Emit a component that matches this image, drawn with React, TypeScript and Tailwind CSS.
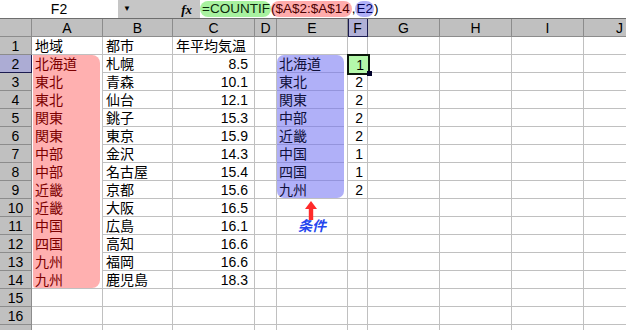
import React from 'react';

const LINE = 'border-[#c0c0c0]';

const colB = ['都市', '札幌', '青森', '仙台', '銚子', '東京', '金沢', '名古屋', '京都', '大阪', '広島', '高知', '福岡', '鹿児島'];
const colC = ['年平均気温', '8.5', '10.1', '12.1', '15.3', '15.9', '14.3', '15.4', '15.6', '16.5', '16.1', '16.6', '16.6', '18.3'];
const regions = ['北海道', '東北', '東北', '関東', '関東', '中部', '中部', '近畿', '近畿', '中国', '四国', '九州', '九州'];
const conds = ['北海道', '東北', '関東', '中部', '近畿', '中国', '四国', '九州'];
const counts = ['1', '2', '2', '2', '2', '1', '1', '2'];

const ROWS = 17;

function Header({ label, w, active }: { label: string; w: string; active?: boolean }) {
    return (
        <div
            className={`${w} h-[18px] flex items-center justify-center border-r border-b ${
                active
                    ? 'bg-[#b0b0d6] border-[#1c1c50] shadow-[inset_1px_0_0_#1c1c50]'
                    : 'bg-[#c0c0c0] border-[#8c8c8c]'
            }`}
        >
            {label}
        </div>
    );
}

function Cell({ children, right }: { children?: React.ReactNode; right?: boolean }) {
    return (
        <div
            className={`h-[18px] border-r border-b ${LINE} flex items-center whitespace-nowrap ${
                right ? 'justify-end pr-[6px]' : 'pl-[3px]'
            }`}
        >
            {children}
        </div>
    );
}

function Column({ label, w, values = [], right }: { label: string; w: string; values?: string[]; right?: boolean }) {
    return (
        <div className={`${w} shrink-0 flex flex-col`}>
            <Header label={label} w={w} />
            {Array.from({ length: ROWS }, (_, i) => (
                <Cell key={i} right={right && i > 0}>
                    {values[i]}
                </Cell>
            ))}
        </div>
    );
}

function UpArrow() {
    return (
        <svg width="12" height="19" viewBox="0 0 12 19" className="mt-[2px]">
            <path d="M6 0 L12 8 L8.2 8 L8.2 19 L3.8 19 L3.8 8 L0 8 Z" fill="#ff2a2a" />
        </svg>
    );
}

export default function App() {
    return (
        <div className="w-[626px] h-[330px] overflow-hidden bg-white text-[14px] leading-none text-black font-['Liberation_Sans','Noto_Sans_CJK_JP',sans-serif]">
            {/* Formula bar */}
            <div className="h-[19px] flex border-b border-[#6e6e6e]">
                <div className="w-[118px] flex items-center justify-center">F2</div>
                <div className="w-[82px] bg-[#c6c6c6] flex items-center">
                    <span className="ml-[5px] text-[8px]">▼</span>
                    <span className="ml-auto mr-[8px] font-['Liberation_Serif',serif] italic font-bold text-[13px]">fx</span>
                </div>
                <div className="flex items-center text-[13.5px]">
                    <span className="h-[16px] flex items-center rounded-full bg-[#a8f2a0] pl-[2px] pr-[1px] text-[#0c2a0c]">=COUNTIF</span>
                    <span className="h-[16px] flex items-center rounded-full bg-[#ffacac] pr-[2px] text-[#4a0000]">($A$2:$A$14</span>
                    <span>,</span>
                    <span className="h-[16px] flex items-center rounded-full bg-[#b0b0f8] px-[1px] text-[#000050]">E2</span>
                    <span>)</span>
                </div>
            </div>

            {/* Sheet */}
            <div className="flex">
                {/* Row numbers */}
                <div className="w-[32px] shrink-0 flex flex-col">
                    <div className="h-[18px] bg-[#c0c0c0] border-r border-b border-[#8c8c8c]" />
                    {Array.from({ length: ROWS }, (_, i) => (
                        <div
                            key={i}
                            className={`h-[18px] flex items-center justify-center border-r border-b ${
                                i === 1 ? 'bg-[#acacd4] border-[#1c1c50]' : 'bg-[#c0c0c0] border-[#8c8c8c]'
                            }`}
                        >
                            {i < 16 ? i + 1 : ''}
                        </div>
                    ))}
                </div>

                {/* A */}
                <div className="w-[71px] shrink-0 flex flex-col">
                    <Header label="A" w="w-[71px]" />
                    <Cell>地域</Cell>
                    <div className={`h-[234px] border-r border-b ${LINE}`}>
                        <div className="h-full ml-[1px] mr-[2px] bg-[#ffb0b0] rounded-tr-[8px] rounded-br-[8px] rounded-bl-[3px] text-[#7c0000]">
                            {regions.map((r, i) => (
                                <div key={i} className="h-[18px] flex items-center pl-[2px]">
                                    {r}
                                </div>
                            ))}
                        </div>
                    </div>
                    {Array.from({ length: 3 }, (_, i) => (
                        <Cell key={i} />
                    ))}
                </div>

                <Column label="B" w="w-[70px]" values={colB} />
                <Column label="C" w="w-[82px]" values={colC} right />
                <Column label="D" w="w-[22px]" />

                {/* E */}
                <div className="w-[71px] shrink-0 flex flex-col">
                    <Header label="E" w="w-[71px]" />
                    <Cell />
                    <div className={`h-[144px] border-r border-b ${LINE}`}>
                        <div className="h-full mr-[3px] bg-[#b0b0f8] rounded-[7px] text-[#10103c]">
                            {conds.map((c, i) => (
                                <div
                                    key={i}
                                    className={`h-[18px] flex items-center pl-[2px] ${
                                        i < conds.length - 1 ? 'border-b border-[#9494dc]' : ''
                                    }`}
                                >
                                    {c}
                                </div>
                            ))}
                        </div>
                    </div>
                    <div className={`h-[18px] border-r border-b ${LINE} flex justify-center pr-[2px]`}>
                        <UpArrow />
                    </div>
                    <div className={`h-[18px] border-r border-b ${LINE} flex items-center justify-center`}>
                        <span className="font-bold italic text-[14px] text-[#2446ee]">条件</span>
                    </div>
                    {Array.from({ length: 6 }, (_, i) => (
                        <Cell key={i} />
                    ))}
                </div>

                {/* F */}
                <div className="w-[20px] shrink-0 flex flex-col">
                    <Header label="F" w="w-[20px]" active />
                    <Cell />
                    <div className={`relative h-[18px] border-r border-b ${LINE}`}>
                        <div className="absolute -left-[1px] -top-[1px] w-[23px] h-[21px] z-10 border-2 border-[#0c180c] bg-[#b4f8aa] flex items-center justify-end pr-[4px]">
                            1
                        </div>
                        <div className="absolute left-[19px] top-[16px] w-[5px] h-[5px] z-20 bg-[#00002a]" />
                    </div>
                    {counts.slice(1).map((c, i) => (
                        <Cell key={i} right>
                            <span className="-mr-[2px]">{c}</span>
                        </Cell>
                    ))}
                    {Array.from({ length: ROWS - 9 }, (_, i) => (
                        <Cell key={i} />
                    ))}
                </div>

                <Column label="G" w="w-[72px]" />
                <Column label="H" w="w-[72px]" />
                <Column label="I" w="w-[72px]" />
                <Column label="J" w="w-[72px]" />
            </div>
        </div>
    );
}
